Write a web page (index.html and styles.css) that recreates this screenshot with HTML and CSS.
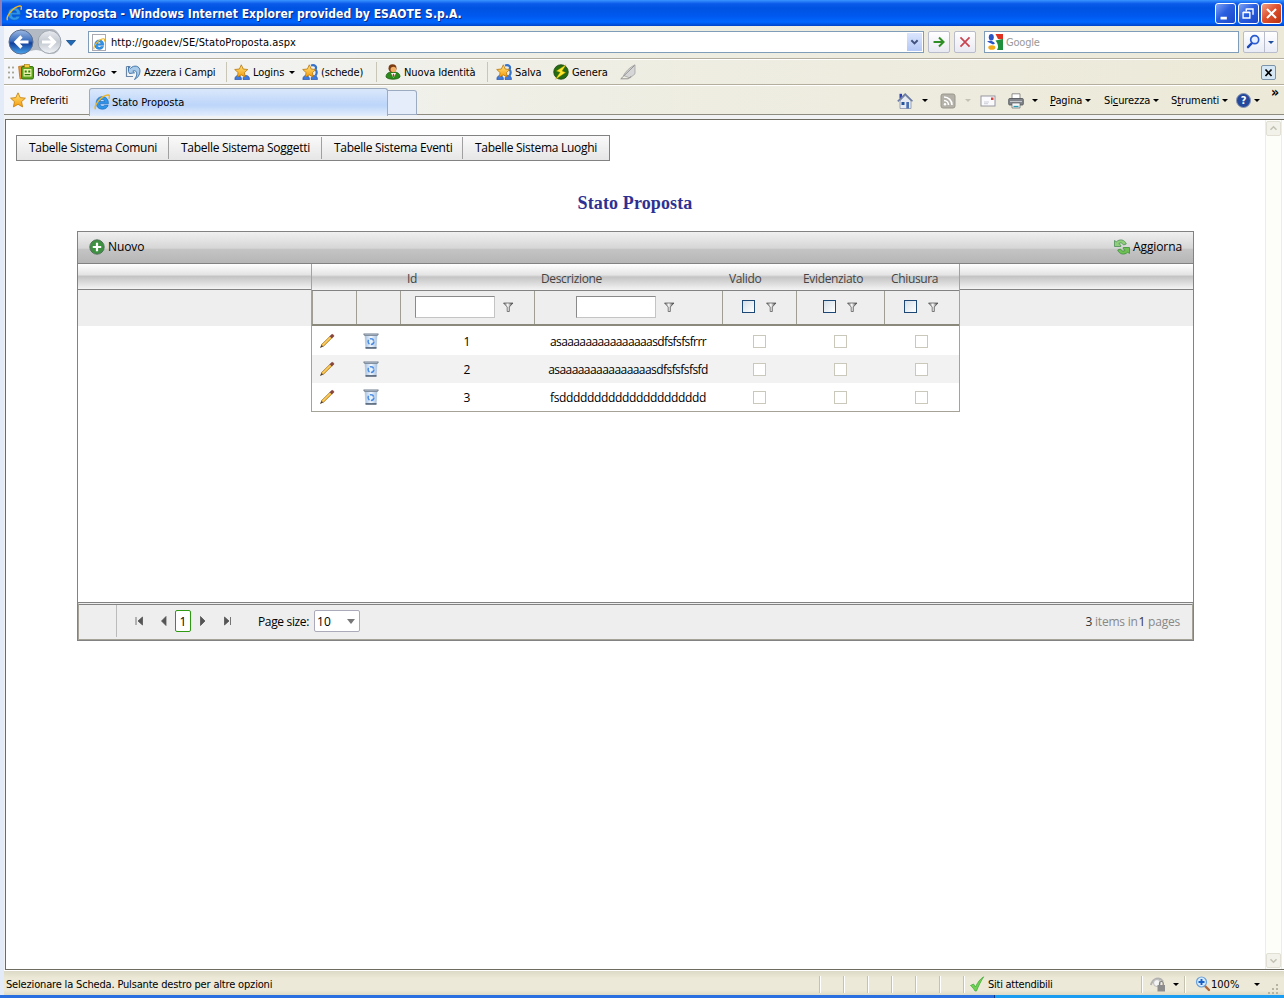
FILE: index.html
```html
<!DOCTYPE html>
<html lang="it">
  <head>
    <meta charset="utf-8">
    <title>Stato Proposta</title>
    <link rel="stylesheet" href="styles.css">
  </head>
  <body>
    <svg class="defs">
      <defs>
        <linearGradient id="gBack" x1="0" y1="0" x2="0" y2="1"><stop offset="0" stop-color="#9db9e2"/><stop offset=".46" stop-color="#3a6cbc"/><stop offset=".54" stop-color="#123f9a"/><stop offset="1" stop-color="#4aa6ee"/></linearGradient>
        <linearGradient id="gFwd" x1="0" y1="0" x2="0" y2="1"><stop offset="0" stop-color="#e8eaee"/><stop offset=".5" stop-color="#c3c9d1"/><stop offset="1" stop-color="#f2f5f8"/></linearGradient>
        <linearGradient id="gStar" x1="0" y1="0" x2="0" y2="1"><stop offset="0" stop-color="#ffe680"/><stop offset="1" stop-color="#f59b0c"/></linearGradient>
        <linearGradient id="gBin" x1="0" y1="0" x2="1" y2="0"><stop offset="0" stop-color="#a9c4e2"/><stop offset=".5" stop-color="#f2f8ff"/><stop offset="1" stop-color="#a9c4e2"/></linearGradient>
        <linearGradient id="gFunnel" x1="0" y1="0" x2="1" y2="0"><stop offset="0" stop-color="#666"/><stop offset=".45" stop-color="#fff"/><stop offset="1" stop-color="#333"/></linearGradient>
      </defs>
      <symbol id="ie" viewBox="0 0 16 16">
        <path fill-rule="evenodd" d="M14.400 9.800H5.900c.3 1.900 1.300 2.500 2.600 2.500 1 0 1.600-.3 2-1h3.600c-.8 2.500-2.900 3.900-5.700 3.900C4.800 15.200 2.200 12.900 2.200 9S4.800 2.700 8.400 2.700c3.800 0 6.200 2.600 6 7.100zM5.900 7.600h4.700C10.400 6.200 9.600 5.400 8.300 5.400S6.200 6.200 5.900 7.600z" fill="#2f95ea" stroke="#1261b2" stroke-width=".6"/>
        <path d="M1.600 15.200C.2 13.600 2.200 8.600 6.600 4.700 10.300 1.400 14.300.2 15.200 1.500c.5.700.3 1.900-.3 3.200" fill="none" stroke="#ecb52a" stroke-width="1.500"/>
      </symbol>
      <symbol id="star" viewBox="0 0 16 16">
        <path d="M8 .8l2.200 4.800 5.200.6-3.900 3.500 1.100 5.200L8 12.300l-4.600 2.600 1.100-5.200L.6 6.200l5.200-.6z" fill="url(#gStar)" stroke="#c9830f" stroke-width=".9"/>
      </symbol>
      <symbol id="people" viewBox="0 0 16 16">
        <path d="M.8 15.500c0-3 1.700-4 3.200-4s3.500 1 3.500 4zM9 15.500c0-3 1.500-4 3.200-4s3.300 1 3.300 4z" fill="#3d7be0" stroke="#17479f" stroke-width=".6"/>
        <path d="M7.300.8l1.900 4.200 4.600.5-3.400 3.100.9 4.500-4-2.200-4.100 2.200.9-4.500L.7 5.500 5.400 5z" fill="url(#gStar)" stroke="#b9770a" stroke-width=".8"/>
      </symbol>
      <symbol id="people2" viewBox="0 0 16 16">
        <path d="M9 1.500c4-1 6 1 4.500 4 2 2 1 5 0 6" fill="none" stroke="#3572c9" stroke-width="2.200"/>
        <use href="#people"/>
      </symbol>
      <symbol id="robo" viewBox="0 0 16 16">
        <path d="M.6 2.500l10-1.500 1 12L2 15z" fill="#f0962a" stroke="#b3610d" stroke-width=".7"/>
        <rect x="3.500" y="2.500" width="12" height="12.500" rx="1.500" fill="#5da31e" stroke="#2f6b08" stroke-width=".9"/>
        <rect x="6.500" y=".6" width="5" height="3" fill="#f5cf3a" stroke="#a07a10" stroke-width=".6"/>
        <rect x="5.500" y="5" width="8" height="7.500" fill="#e8f2a8"/>
        <path d="M6.700 6.500h2v2h-2zM10.300 6.500h2v2h-2zM6.700 10h5.600v1.300H6.700z" fill="#2f7b08"/>
      </symbol>
      <symbol id="undo" viewBox="0 0 16 16">
        <path d="M1.500 2.500h4M1.500 2.500v10h6.500" fill="none" stroke="#6c86a8" stroke-width="1.200"/>
        <path d="M3.500 7.500V2.500l2 1.800C9 .5 15 1.800 15 7c0 4-2.500 7-5.500 8.500 1.500-2 3-5 2-7.300-.8-1.800-2.500-1.800-3.700-1l1.700 1.600-5 .7z" fill="#a9cbe9" stroke="#3a6ea5" stroke-width=".9"/>
      </symbol>
      <symbol id="identity" viewBox="0 0 16 16">
        <path d="M1 13c0-4 3-5 7-5s7 1 7 5c-2 3-12 3-14 0z" fill="#2d8a1c" stroke="#14540a" stroke-width=".7"/>
        <path d="M6 9L8.500 14 11 9z" fill="#fff"/>
        <path d="M8.500 9.500l1 1.500-1 3-1-3z" fill="#cc2a1a"/>
        <circle cx="7.500" cy="4.300" r="4" fill="#7a3b10"/>
        <circle cx="8.400" cy="5.500" r="2.800" fill="#f3b065"/>
      </symbol>
      <symbol id="bolt" viewBox="0 0 16 16">
        <circle cx="8" cy="8" r="7.300" fill="#256b12" stroke="#123f06" stroke-width=".7"/>
        <path d="M13 .8L3.500 7l3.700 1.300L2.500 15.300 12.500 8.500 9 7z" fill="#ffe92e" stroke="#b99a00" stroke-width=".4"/>
      </symbol>
      <symbol id="pen" viewBox="0 0 16 16">
        <path d="M3.500 11.500C5.500 7.500 10 3 15 .8v9l-5 4.200z" fill="#d6d6d6" stroke="#a2a2a2" stroke-width=".8"/>
        <path d="M.8 14.800h7.400l3-2.500M.8 14.800L14.500 1.500" fill="none" stroke="#8b8b8b" stroke-width=".9"/>
      </symbol>
      <symbol id="house" viewBox="0 0 16 16">
        <path d="M3 8v7.500h11V8L8.200 2.500z" fill="#e6ebf3" stroke="#8692a8" stroke-width=".8"/>
        <path d="M2.500.8H5v4.700H2.500z" fill="#2a3fb0"/>
        <path d="M.8 8.300L8.200 1.200l7.300 7.100" fill="none" stroke="#6a7aa2" stroke-width="1.600"/>
        <path d="M4.500 9h3v3h-3z" fill="#24539c"/><path d="M9.300 9h2.700v6.500H9.300z" fill="#4a6fb3"/>
      </symbol>
      <symbol id="rss" viewBox="0 0 16 16">
        <rect x="1" y="1" width="14" height="14" rx="2" fill="#b4b2a8" stroke="#9a988e"/>
        <path d="M4 4c4.500 0 8 3.500 8 8M4 7.500c2.500 0 4.500 2 4.500 4.500" fill="none" stroke="#fff" stroke-width="1.600"/><circle cx="5" cy="11.200" r="1.200" fill="#fff"/>
      </symbol>
      <symbol id="mail" viewBox="0 0 16 16">
        <rect x="1" y="3" width="14" height="10" fill="#fafafc" stroke="#8e8e9a" stroke-width=".9"/>
        <path d="M4 9h5M4 10.700h4" stroke="#b8bcc8" stroke-width=".7"/><path d="M11 4.500h2.500V7H11z" fill="#d8403a"/>
      </symbol>
      <symbol id="printer" viewBox="0 0 16 16">
        <path d="M4 .8h8V6H4z" fill="#fff" stroke="#777" stroke-width=".8"/>
        <rect x=".7" y="5.500" width="14.600" height="6.500" rx="1" fill="#82868c" stroke="#4c5056" stroke-width=".8"/>
        <path d="M2 8.500h12" stroke="#c4c8cc"/><path d="M4 10h8v5H4z" fill="#f4f8fa" stroke="#666" stroke-width=".7"/>
        <path d="M5.500 13.500h5" stroke="#2a9ab0" stroke-width="1.300"/>
      </symbol>
      <symbol id="lens" viewBox="0 0 16 16">
        <path d="M7 9L3 13.200" stroke="#1c48b8" stroke-width="2.400" stroke-linecap="round"/>
        <circle cx="9.700" cy="5.700" r="4" fill="#e9f1ff" stroke="#2a5bd0" stroke-width="1.700"/>
      </symbol>
      <symbol id="zoomin" viewBox="0 0 16 16">
        <path d="M10 10l4 4" stroke="#b0683a" stroke-width="2.400" stroke-linecap="round"/>
        <circle cx="6.500" cy="6" r="5" fill="#d7ebff" stroke="#6ba0d8" stroke-width="1.200"/>
        <path d="M6.500 3v6M3.500 6h6" stroke="#1660c8" stroke-width="1.900"/>
      </symbol>
      <symbol id="google" viewBox="0 0 16 16">
        <path fill="#fff" d="M0 0h16v16H0z"/><path fill="#e03020" d="M8.500 0H16v5.500L11 5z"/><path fill="#1f8f3c" d="M8.500 6.500L16 5v11h-6c2-3 1-6-1.500-9.500z"/>
        <ellipse cx="4.300" cy="3.200" rx="2.500" ry="3.200" fill="#2a54c4"/><path d="M0 7.500c3-1.500 6-1 8 2L6 10.500z" fill="#2a54c4"/>
        <ellipse cx="4.800" cy="13.500" rx="3.500" ry="2.300" fill="#f2ab18"/>
      </symbol>
      <symbol id="pencil" viewBox="0 0 16 16">
        <path d="M1 15l1.300-3.300 2 1.900z" fill="#4a3a28"/>
        <path d="M2.300 11.700L11 3.200l1.900 1.900-8.600 8.500z" fill="#f0b43a" stroke="#9a6a14" stroke-width=".6"/>
        <path d="M3.500 12.200L11.700 4" stroke="#ffe9a0" stroke-width=".7"/>
        <path d="M11 3.200l1.700-1.700c1.400-.4 2.300.6 2 2L12.900 5.100z" fill="#8c4438" stroke="#6c3028" stroke-width=".6"/>
      </symbol>
      <symbol id="bin" viewBox="0 0 16 16">
        <path d="M2 2.500h12l-.8 12.500H2.800z" fill="url(#gBin)" stroke="#9ab0cc" stroke-width=".4"/>
        <path d="M.5.500h15v1.200l-1 1h-13l-1-1z" fill="#6c7888"/><path d="M1.500 1.300h13" stroke="#c3d0de" stroke-width=".7"/>
        <path d="M2.500 14.200h11v1.500h-11z" fill="#49596e"/>
        <circle cx="8" cy="8.600" r="2.900" fill="none" stroke="#4a8ce4" stroke-width="1.500" stroke-dasharray="4.600 1.470"/>
      </symbol>
      <symbol id="funnel" viewBox="0 0 12 12">
        <path d="M1.500 2h9.500L7.300 6v4.500H5.200V6z" fill="url(#gFunnel)" stroke="#4a4a4a" stroke-width=".7"/>
      </symbol>
      <symbol id="plus" viewBox="0 0 16 16">
        <circle cx="8" cy="8" r="7.200" fill="#3f9142" stroke="#4c6b55" stroke-width=".9"/>
        <path d="M8 3.800v8.400M3.800 8h8.400" stroke="#fff" stroke-width="2.200"/>
      </symbol>
      <symbol id="refresh" viewBox="0 0 16 16">
        <path d="M.5 1.500l1.800 1.300C5.500-.2 10.500.3 12.300 5L9.500 6C8.300 3.800 6.500 3.300 4.800 4.600L6.800 6.200v1.300H.5z" fill="#8fcf7a" stroke="#4c8f58" stroke-width=".8"/>
        <path d="M15.500 14.500l-1.800-1.300c-3.200 3-8.200 2.500-10-2.200L6.500 10c1.200 2.200 3 2.700 4.700 1.400L9.200 9.800V8.500h6.300z" fill="#6fc054" stroke="#3c8f38" stroke-width=".8"/>
      </symbol>
      <symbol id="check" viewBox="0 0 16 16">
        <path d="M1.500 9.500l3-1.500 2 3C8.500 6.500 11 3 14.700.8 12 5 9.500 10 7.500 15H6C4.800 13 3.500 11 1.500 9.500z" fill="#6fd052" stroke="#3aa832" stroke-width=".7"/>
      </symbol>
      <symbol id="lock" viewBox="0 0 16 16">
        <path d="M.8 9C3 2.500 9 0 13 5.500" fill="none" stroke="#b2b2b2" stroke-width="2"/>
        <circle cx="7" cy="7" r="3.500" fill="#f4f4f4" stroke="#bbb"/>
        <rect x="7.500" y="9" width="7.500" height="6.500" fill="#8c8c8c"/><path d="M9.500 9V7c0-2 3.700-2 3.700 0v2" fill="none" stroke="#808080" stroke-width="1.200"/>
      </symbol>
    </svg>

    <div class="titlebar">
      <svg class="icon"><use href="#ie"/></svg>
      <span class="title">Stato Proposta - Windows Internet Explorer provided by ESAOTE S.p.A.</span>
      <div class="winbtns">
        <svg class="winbtn" viewBox="0 0 21 21"><path d="M5 14h7v3H5z" fill="#fff"/></svg>
        <svg class="winbtn" viewBox="0 0 21 21"><path d="M8 5.500h7.500v6.500M8 5v3M4.500 9.500h7.500v6H4.500z M4.500 9h7.500" fill="none" stroke="#fff" stroke-width="1.500"/></svg>
        <svg class="winbtn close" viewBox="0 0 21 21"><path d="M5.500 5.500l10 10m0-10l-10 10" stroke="#fff" stroke-width="2.200"/></svg>
      </div>
    </div>

    <div class="window">
      <div class="bar nav">
        <svg class="travel" viewBox="0 0 56 28">
          <path d="M12 1h32c3 0 9 4 9 13s-6 12-9 12c-6 0-10-4-16-4s-10 4-16 4z" fill="#b4bac3"/>
          <circle cx="13" cy="14" r="12" fill="url(#gBack)" stroke="#5b6f92"/>
          <circle cx="41.500" cy="14" r="11.500" fill="url(#gFwd)" stroke="#9da4ae"/>
          <path d="M20.500 14H8.500M13.500 8.500L8 14l5.500 5.500" fill="none" stroke="#fff" stroke-width="3.200"/>
          <path d="M34 14h12M41 8.500l5.500 5.500-5.500 5.500" fill="none" stroke="#fff" stroke-width="3"/>
        </svg>
        <svg class="history" viewBox="0 0 10 6"><path d="M.5.500h9L5 5.500z" fill="#1f6ab8" stroke="#134a88" stroke-width=".8"/></svg>
        <div class="address">
          <span class="page-icon"><svg class="icon"><use href="#ie"/></svg></span>
          <span class="url">http://goadev/SE/StatoProposta.aspx</span>
          <svg class="drop" viewBox="0 0 15 20"><path d="M4 8l3.500 3.500L11 8" fill="none" stroke="#41547f" stroke-width="2.200"/></svg>
        </div>
        <svg class="navbtn" viewBox="0 0 22 22"><path d="M5 11h10M11 6l5 5-5 5" fill="none" stroke="#2f8f24" stroke-width="2.200"/></svg>
        <svg class="navbtn stop" viewBox="0 0 22 22"><path d="M6 6l10 10M16 6L6 16" stroke="#c84450" stroke-width="1.900"/></svg>
        <div class="search"><svg class="icon"><use href="#google"/></svg><span class="hint">Google</span></div>
        <div class="searchbtn"><svg class="icon"><use href="#lens"/></svg><span class="split"><i class="caret blue"></i></span></div>
      </div>

      <div class="bar robo">
        <span class="grip"></span>
        <span class="tool t1"><svg class="icon"><use href="#robo"/></svg><span>RoboForm2Go</span><i class="caret"></i></span>
        <span class="tool t2"><svg class="icon"><use href="#undo"/></svg><span>Azzera i Campi</span></span>
        <span class="tool t3"><svg class="icon"><use href="#people"/></svg><span>Logins</span><i class="caret"></i></span>
        <span class="tool t4"><svg class="icon"><use href="#people2"/></svg><span>(schede)</span></span>
        <span class="tool t5"><svg class="icon"><use href="#identity"/></svg><span>Nuova Identità</span></span>
        <span class="tool t6"><svg class="icon"><use href="#people2"/></svg><span>Salva</span></span>
        <span class="tool t7"><svg class="icon"><use href="#bolt"/></svg><span>Genera</span></span>
        <svg class="icon"><use href="#pen"/></svg>
        <svg class="robo-close" viewBox="0 0 15 15"><path d="M4 4l7 7.500M11 4l-7 7.500" stroke="#000" stroke-width="2"/></svg>
      </div>

      <div class="bar tabs">
        <span class="fav"><svg class="icon"><use href="#star"/></svg><span>Preferiti</span></span>
        <span class="tab"><svg class="icon"><use href="#ie"/></svg><span>Stato Proposta</span></span>
        <span class="newtab"></span>
        <div class="commands">
          <span class="cmd c1"><svg class="icon"><use href="#house"/></svg><i class="caret"></i></span>
          <span class="cmd c2"><svg class="icon"><use href="#rss"/></svg><i class="caret off"></i></span>
          <span class="cmd c3"><svg class="icon"><use href="#mail"/></svg></span>
          <span class="cmd c4"><svg class="icon"><use href="#printer"/></svg><i class="caret"></i></span>
          <span class="cmd c5"><span><u>P</u>agina</span><i class="caret"></i></span>
          <span class="cmd c6"><span>Si<u>c</u>urezza</span><i class="caret"></i></span>
          <span class="cmd c7"><span>S<u>t</u>rumenti</span><i class="caret"></i></span>
          <span class="cmd c8"><span class="help">?</span><i class="caret"></i></span>
          <span class="more">»</span>
        </div>
      </div>

      <div class="view">
        <div class="page">
          <div class="menu">
            <span class="m1">Tabelle Sistema Comuni</span>
            <span class="m2">Tabelle Sistema Soggetti</span>
            <span class="m3">Tabelle Sistema Eventi</span>
            <span class="m4">Tabelle Sistema Luoghi</span>
          </div>
          <h1>Stato Proposta</h1>

          <div class="grid">
            <div class="commandrow">
              <svg class="icon"><use href="#plus"/></svg><span class="new">Nuovo</span>
              <svg class="icon right"><use href="#refresh"/></svg><span class="reload">Aggiorna</span>
            </div>
            <div class="gridbody">
              <div class="side"><div class="sidehead"></div><div class="sidefilter"></div></div>
              <div class="table">
                <div class="row head">
                  <span></span><span></span><span>Id</span><span>Descrizione</span><span>Valido</span><span>Evidenziato</span><span>Chiusura</span>
                </div>
                <div class="row filter">
                  <span></span><span></span>
                  <span class="text"><i class="input"></i><svg class="funnel"><use href="#funnel"/></svg></span>
                  <span class="text"><i class="input"></i><svg class="funnel"><use href="#funnel"/></svg></span>
                  <span><i class="box"></i><svg class="funnel"><use href="#funnel"/></svg></span>
                  <span><i class="box"></i><svg class="funnel"><use href="#funnel"/></svg></span>
                  <span><i class="box"></i><svg class="funnel"><use href="#funnel"/></svg></span>
                </div>
                <div class="row first">
                  <span class="act"><svg class="icon"><use href="#pencil"/></svg></span><span class="act"><svg class="icon"><use href="#bin"/></svg></span>
                  <span>1</span><span class="d1">asaaaaaaaaaaaaaaasdfsfsfsfrrr</span>
                  <span><i class="box off"></i></span><span><i class="box off"></i></span><span><i class="box off"></i></span>
                </div>
                <div class="row alt">
                  <span class="act"><svg class="icon"><use href="#pencil"/></svg></span><span class="act"><svg class="icon"><use href="#bin"/></svg></span>
                  <span>2</span><span class="d2">asaaaaaaaaaaaaaaasdfsfsfsfsfd</span>
                  <span><i class="box off"></i></span><span><i class="box off"></i></span><span><i class="box off"></i></span>
                </div>
                <div class="row">
                  <span class="act"><svg class="icon"><use href="#pencil"/></svg></span><span class="act"><svg class="icon"><use href="#bin"/></svg></span>
                  <span>3</span><span class="d3">fsddddddddddddddddddddd</span>
                  <span><i class="box off"></i></span><span><i class="box off"></i></span><span><i class="box off"></i></span>
                </div>
              </div>
              <div class="side rest"><div class="sidehead"></div><div class="sidefilter"></div></div>
            </div>
            <div class="pager">
              <span class="stub"></span>
              <svg class="arrows" viewBox="0 0 48 12"><path d="M3 2v8M9.500 2v8L5 6zM33 1.500v9L28.500 6z" fill="#555" stroke="#555" stroke-width=".8"/></svg>
              <span class="current">1</span>
              <svg class="arrows next" viewBox="0 0 48 12"><path d="M9.500 1.500v9L14 6zM33.500 2v8l4.500-4zM39.500 2v8" fill="#555" stroke="#555" stroke-width=".8"/></svg>
              <span class="size">Page size:</span>
              <span class="combo">10<i class="caret grey"></i></span>
              <span class="info"><b>3</b> items in <b class="pages">1</b> pages</span>
            </div>
          </div>
        </div>
        <div class="scroll">
          <svg class="sbtn" viewBox="0 0 15 15"><path d="M4 9l3.500-3.500L11 9" fill="none" stroke="#c3c2b4" stroke-width="1.800"/></svg>
          <svg class="sbtn" viewBox="0 0 15 15"><path d="M4 6l3.500 3.500L11 6" fill="none" stroke="#c3c2b4" stroke-width="1.800"/></svg>
        </div>
      </div>

      <div class="status">
        <span class="msg">Selezionare la Scheda. Pulsante destro per altre opzioni</span>
        <span class="pane"></span><span class="pane"></span><span class="pane"></span><span class="pane"></span><span class="pane"></span><span class="pane"></span>
        <span class="pane zone"><svg class="icon"><use href="#check"/></svg><span>Siti attendibili</span></span>
        <span class="pane guard"><svg class="icon"><use href="#lock"/></svg><i class="caret"></i></span>
        <span class="pane zoom"><svg class="icon"><use href="#zoomin"/></svg><span class="pct">100%</span><i class="caret"></i></span>
        <svg class="resize" viewBox="0 0 12 12"><path d="M9 1h2v2H9zM5 5h2v2H5zM9 5h2v2H9zM1 9h2v2H1zM5 9h2v2H5zM9 9h2v2H9z" fill="#b8b4a2"/></svg>
      </div>
    </div>
    <div class="taskbar"><span class="task"></span></div>
  </body>
</html>
```
FILE: styles.css
```css
*          { box-sizing: border-box; }
body       { margin: 0; width: 1284px; height: 998px; overflow: hidden; background: #e3ebf8; color: #000; font: 11px "DejaVu Sans Condensed", "DejaVu Sans", sans-serif; font-stretch: condensed; display: flex; flex-direction: column; }
span       { white-space: nowrap; }
svg        { display: block; flex: none; }
i          { flex: none; }
.defs      { position: absolute; width: 0; height: 0; }
.icon      { width: 16px; height: 16px; }
.caret     { width: 0; height: 0; border: 3px solid transparent; border-top-color: #000; border-bottom: 0; }
.caret.off { border-top-color: #c4c2b6; }
.caret.blue { border-top-color: #1f4f9c; }

/* title bar */
.titlebar  { height: 26px; flex: none; display: flex; align-items: center; padding: 0 0 0 4px; border-left: 2px solid #8f7fb4; background: linear-gradient(#3a95ff, #0c5bea 14%, #0053e1 30%, #0058ee 60%, #0066ff 85%, #0044c8); }
.title     { margin-left: 3px; color: #fff; font-weight: bold; font-size: 12px; letter-spacing: .04px; text-shadow: 1px 1px 0 #0a2a80; padding-top: 1px; }
.winbtns   { margin-left: auto; display: flex; gap: 2px; padding-right: 2px; }
.winbtn    { width: 21px; height: 21px; border: 1px solid #fff; border-radius: 3px; background: linear-gradient(135deg, #7ea2f4, #2a5fe0 45%, #1c48c8); }
.winbtn.close { background: linear-gradient(135deg, #f0a085, #df5230 45%, #b8320e); }

.window    { height: 969px; flex: none; margin-left: 4px; display: flex; flex-direction: column; background: #f1f2f3; }
.bar       { display: flex; align-items: center; flex: none; background: linear-gradient(90deg, #f4f6fa, #efeee4 45%, #ece9d8); }

/* address row */
.nav       { height: 33px; border-bottom: 1px solid #b3ae9e; }
.travel    { width: 56px; height: 28px; margin-left: 4px; }
.history   { width: 10px; height: 6px; margin: 2px 0 0 2px; }
.address   { width: 836px; height: 22px; margin-left: 12px; border: 1px solid #7f9db9; background: #fff; display: flex; align-items: center; }
.page-icon { width: 14px; height: 17px; margin: 0 5px 0 3px; border: 1px solid #a9a9b4; padding: 3px 0 0 0; }
.page-icon .icon { width: 12px; height: 12px; }
.url       { letter-spacing: .09px; padding-top: 1px; }
.drop      { width: 15px; height: 18px; margin: 0 1px 0 auto; background: linear-gradient(#dbe5fd, #b4c8f6); }
.navbtn    { width: 22px; height: 22px; margin-left: 4px; border: 1px solid #b9bccb; border-radius: 2px; background: linear-gradient(#fff, #e9e9f2); }
.search    { width: 255px; height: 22px; margin-left: 8px; border: 1px solid #7f9db9; background: #fff; display: flex; align-items: center; padding-left: 2px; }
.hint      { color: #999; margin-left: 3px; padding-top: 1px; letter-spacing: -.2px; }
.searchbtn { width: 35px; height: 22px; margin-left: 4px; border: 1px solid #b9bccb; border-radius: 2px; background: linear-gradient(#fff, #e9ecf6); display: flex; align-items: center; }
.searchbtn .icon { margin-left: 1px; }
.split     { margin-left: 3px; height: 20px; border-left: 1px solid #b9bccb; display: flex; align-items: center; padding-left: 3px; }

/* roboform row */
.robo      { height: 26px; border-top: 1px solid #fff; border-bottom: 1px solid #b3ae9e; }
.grip      { width: 7px; height: 14px; margin-left: 3px; background: radial-gradient(circle, #a8a698 1px, transparent 1.2px) 0 0 / 4px 5px; }
.tool      { display: flex; align-items: center; gap: 3px; height: 20px; flex: none; letter-spacing: -.1px; }
.tool .caret { margin-left: 2px; }
.t1        { width: 107px; margin-left: 4px; }
.t2        { width: 102px; border-right: 1px solid #c9c6b8; letter-spacing: -.2px; }
.t3        { width: 68px; margin-left: 7px; }
.t4        { width: 75px; border-right: 1px solid #c9c6b8; }
.t5        { width: 103px; margin-left: 8px; border-right: 1px solid #c9c6b8; }
.t6        { width: 57px; margin-left: 8px; }
.t7        { width: 67px; }
.robo-close { width: 15px; height: 15px; margin: 0 8px 0 auto; border: 1px solid #7b93a8; border-radius: 2px; background: #d5e7f5; }

/* tab row */
.tabs      { height: 30px; border-top: 1px solid #fff; border-bottom: 1px solid #8e8c80; align-items: flex-start; }
.fav       { width: 85px; display: flex; align-items: center; gap: 4px; padding: 6px 0 0 6px; letter-spacing: -.05px; }
.tab       { width: 299px; height: 28px; margin-top: 2px; border: 1px solid #9cabc0; border-bottom: 0; border-radius: 3px 3px 0 0; display: flex; align-items: center; gap: 2px; padding: 0 0 1px 4px; background: linear-gradient(#dbe8fb, #bcd5fa 60%, #e3edfc); }
.newtab    { width: 29px; height: 25px; margin-top: 4px; border: 1px solid #9cabc0; border-left: 0; border-radius: 0 3px 0 0; background: #e4edf9; }
.commands  { margin-left: 480px; display: flex; align-items: center; height: 29px; }
.cmd       { display: flex; align-items: center; flex: none; }
.c1        { width: 43px; gap: 9px; }
.c2        { width: 40px; gap: 9px; }
.c3        { width: 28px; }
.c4        { width: 42px; gap: 8px; }
.c5, .c6, .c7 { gap: 3px; letter-spacing: -.1px; }
.c5        { width: 54px; }
.c6        { width: 67px; }
.c7        { width: 65px; }
.c8        { width: 35px; gap: 3px; }
.help      { width: 15px; height: 15px; border-radius: 8px; border: 1px solid #8a96b0; background: #24489c; color: #fff; font-weight: bold; text-align: center; line-height: 13px; }
.more      { font-weight: bold; font-size: 14px; margin-top: -17px; }

/* page */
.view      { flex: 1; margin-top: 4px; border: 1px solid #6e6c60; border-width: 1px 0 1px 1px; margin-left: 1px; background: #fff; display: flex; }
.page      { width: 1259px; flex: none; font: 12px "Open Sans", "Noto Sans", sans-serif; padding: 15px 0 0 10px; }
.menu      { width: 594px; height: 26px; border: 1px solid #828282; background: linear-gradient(#fafafa, #e6e6e6); display: flex; align-items: center; }
.menu span { height: 22px; line-height: 22px; padding-left: 12px; border-right: 1px solid #a0a0a0; letter-spacing: -.28px; }
.m1        { width: 152px; }
.m2, .m3   { width: 153px; }
.menu .m3  { width: 141px; }
.menu .m4  { border: 0; }
h1         { margin: 31px 0 17px -11px; text-align: center; color: #2e3192; font: bold 18px/22px "Liberation Serif", serif; letter-spacing: .12px; }
.grid      { width: 1117px; height: 410px; margin-left: 61px; border: 1px solid #828282; display: flex; flex-direction: column; }
.commandrow { height: 32px; flex: none; display: flex; align-items: center; padding: 0 11px 2px; border-bottom: 1px solid #828282; background: linear-gradient(#f0f0f0, #d6d6d6 52%, #c4c4c4 56%, #b6b6b6); }
.new       { margin-left: 3px; letter-spacing: -.1px; }
.right     { margin-left: auto; }
.reload    { margin-left: 3px; letter-spacing: -.1px; }
.gridbody  { flex: 1; display: flex; align-items: flex-start; }
.side      { width: 233px; }
.side.rest { flex: 1; }
.sidehead, .head { height: 26px; background: linear-gradient(#fff, #e4e4e4 42%, #c4c4c4 50%, #f4f4f4); border-bottom: 1px solid #828282; }
.sidefilter { height: 36px; background: #eee; }
.table     { width: 649px; border: 1px solid #a5a398; border-width: 0 1px 1px 1px; }
.row       { height: 28px; display: grid; grid-template-columns: 44px 44px 134px 188px 74px 88px 75px; }
.row span  { display: flex; align-items: center; justify-content: center; }
.row.head  { height: 27px; padding: 3px 0 0; color: #444; letter-spacing: -.35px; }
.head span { justify-content: flex-start; padding-left: 7px; }
.first     { margin-top: 1px; }
.act       { padding-right: 14px; }
.alt       { background: #f2f2f2; }
.row.filter { height: 35px; background: #eee; border-bottom: 2px solid #8b897c; }
.filter span { border-left: 1px solid #a09e94; gap: 10px; padding: 0 1px 2px 0; }
.filter .text { gap: 7px; padding-right: 6px; }
.input     { width: 80px; height: 22px; border: 1px solid #8a8a8a; border-right-color: #c4c4c4; border-bottom-color: #c4c4c4; background: #fff; }
.funnel    { width: 12px; height: 12px; }
.box       { width: 13px; height: 13px; border: 1px solid #1d4875; background: linear-gradient(135deg, #d5dfe8, #fff); }
.box.off   { border-color: #cac8bb; background: #fff; }
.d1        { letter-spacing: -.6px; }
.d2        { letter-spacing: -.56px; }
.d3        { letter-spacing: -.35px; }

.pager     { height: 38px; flex: none; border: 1px solid #a5a398; border-top: 3px double #828282; background: #eee; display: flex; align-items: center; padding-bottom: 2px; }
.stub      { width: 38px; height: 32px; border-right: 1px solid #bbb; }
.arrows    { width: 48px; height: 12px; margin-left: 16px; }
.current   { width: 16px; height: 22px; margin-left: -6px; border: 1px solid #2e9a12; border-radius: 2px; background: #fff; text-align: center; line-height: 21px; }
.next      { margin-left: 0; }
.size      { margin-left: 19px; letter-spacing: -.35px; }
.combo     { width: 46px; height: 22px; margin-left: 5px; border: 1px solid #aab; border-radius: 2px; background: #fff; display: flex; align-items: center; justify-content: space-between; padding: 0 4px 0 2px; }
.caret.grey { border-width: 5px 4px 0; border-top-color: #777; }
.info      { margin-left: auto; margin-right: 12px; color: #888; letter-spacing: -.22px; }
.info b    { font-weight: normal; color: #333; }
.pages     { margin-left: -2px; }

.scroll    { width: 17px; border-left: 1px solid #eeede5; border-right: 1px solid #eeede5; background: #fdfdfa; display: flex; flex-direction: column; justify-content: space-between; padding: 1px 0; }
.sbtn      { width: 15px; height: 15px; border: 1px solid #e2e0d4; border-radius: 2px; background: #f3f2ea; }

/* status bar */
.status    { height: 25px; flex: none; display: flex; align-items: center; border-top: 1px solid #fff; background: linear-gradient(#dcd9c6, #ece9d8 30%, #ece9d8 80%, #dedbc8); padding-top: 2px; }
.msg       { width: 815px; padding-left: 2px; letter-spacing: -.17px; }
.pane      { width: 24px; height: 17px; border-left: 1px solid #c5c2b0; box-shadow: inset 1px 0 #fff; display: flex; align-items: center; flex: none; }
.zone      { width: 178px; padding-left: 5px; gap: 3px; letter-spacing: -.25px; }
.guard     { width: 43px; padding-left: 8px; gap: 7px; }
.zoom      { width: 83px; padding-left: 10px; }
.pct       { width: 43px; }
.resize    { width: 12px; height: 12px; margin-top: 9px; }
.taskbar   { height: 3px; flex: none; background: #2a6fe0; }
.task      { display: block; width: 290px; height: 3px; margin-left: auto; background: #1a9cf0; border-left: 1px solid #0a3a90; }
```
